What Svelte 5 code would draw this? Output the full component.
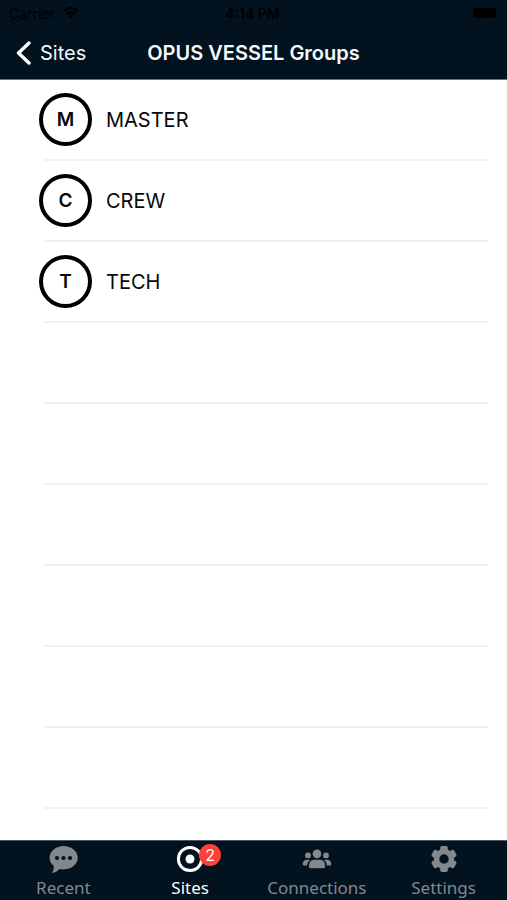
<script>
  const groups = ['MASTER', 'CREW', 'TECH'];
  const emptyRows = [1, 2, 3, 4, 5, 6];
  const tabs = [
    { id: 'recent', label: 'Recent' },
    { id: 'sites', label: 'Sites', badge: 2 },
    { id: 'connections', label: 'Connections' },
    { id: 'settings', label: 'Settings' }
  ];
  let active = $state('sites');
</script>

<div class="app">
  <header>
    <div class="status">
      <div class="carrier">
        <span>Carrier</span>
        <svg width="16" height="12" viewBox="0 0 16 12" aria-hidden="true">
          <path d="M1 4.2Q8-2 15 4.2M3.5 7Q8 3.3 12.5 7" fill="none" stroke="#000" stroke-width="2.4" />
          <path d="M5.4 9Q8 7 10.6 9L8 12Z" />
        </svg>
      </div>
      <span class="clock">4:14 PM</span>
      <div class="power"><span class="battery"></span></div>
    </div>
    <div class="nav">
      <button class="back">
        <svg width="15" height="24" viewBox="0 0 15 24" aria-hidden="true">
          <path d="M13 2 2.5 12 13 22" fill="none" stroke="#fff" stroke-width="3.4" stroke-linecap="round" stroke-linejoin="round" />
        </svg>
        <span>Sites</span>
      </button>
      <h1>OPUS VESSEL Groups</h1>
    </div>
  </header>

  <main>
    <ul>
      {#each groups as group}
        <li>
          <button class="group">
            <span class="avatar">{group[0]}</span>
            <span>{group}</span>
          </button>
        </li>
      {/each}
      {#each emptyRows as row (row)}
        <li aria-hidden="true"></li>
      {/each}
    </ul>
  </main>

  <nav class="tabs">
    {#each tabs as tab}
      <button class="tab" class:active={active === tab.id} onclick={() => (active = tab.id)}>
        <span class="icon">
          <svg width="30" height="28" viewBox="0 0 30 28" aria-hidden="true">
            {#if tab.id === 'recent'}
              <path fill="currentColor" d="M15.5 1C23.4 1 29.8 6.2 29.8 12.8S23.4 24.4 15.5 24.4Q13.4 24.4 11.5 24C9.2 26.3 7.2 27.6 3.8 28C5.2 26.4 6 23.9 5.8 21.1C3.1 18.9 1.6 16 1.6 12.8C1.6 6.2 7.9 1 15.5 1Z" />
              <g fill="#02121f">
                <circle cx="9" cy="13" r="2.1" />
                <circle cx="15.5" cy="13" r="2.1" />
                <circle cx="22" cy="13" r="2.1" />
              </g>
            {:else if tab.id === 'sites'}
              <circle cx="15" cy="14" r="11.6" fill="none" stroke="currentColor" stroke-width="3" />
              <circle cx="15" cy="14" r="4.5" fill="currentColor" />
            {:else if tab.id === 'connections'}
              <g fill="currentColor">
                <circle cx="15" cy="8.8" r="4.4" />
                <circle cx="6" cy="10.4" r="2.9" />
                <circle cx="24" cy="10.4" r="2.9" />
                <path d="M7 21.8V20.3C7 16.8 9.4 14.8 12.5 14.8H17.5C20.6 14.8 23 16.8 23 20.3V21.8Q23 23.3 21.5 23.3H8.5Q7 23.3 7 21.8Z" />
                <path d="M8.3 15Q5.2 16.8 5.3 20.5H2Q.7 20.5.7 19.2C.7 16.6 2.4 14.8 5 14.8ZM21.7 15Q24.8 16.8 24.7 20.5H28Q29.3 20.5 29.3 19.2C29.3 16.6 27.6 14.8 25 14.8Z" />
              </g>
            {:else}
              <g fill="currentColor">
                {#each [0, 60, 120] as angle}
                  <rect x="11.2" y="1" width="7.6" height="26" rx="1.8" transform="rotate({angle} 15 14)" />
                {/each}
              </g>
              <circle cx="15" cy="14" r="7.4" fill="none" stroke="currentColor" stroke-width="5.4" />
              <circle cx="15" cy="14" r="4.7" fill="#02121f" />
            {/if}
          </svg>
          {#if tab.badge}<span class="badge">{tab.badge}</span>{/if}
        </span>
        <span>{tab.label}</span>
      </button>
    {/each}
  </nav>
</div>

<style>
  :global(body) {
    margin: 0;
    background: #fff;
  }
  .app {
    min-height: 100vh;
    display: flex;
    flex-direction: column;
    font-family: Inter, Roboto, sans-serif;
    font-size: 20px;
    color: #080808;
  }
  button {
    border: 0;
    padding: 0;
    background: none;
    font: inherit;
    color: inherit;
    cursor: pointer;
  }
  header {
    background: #02121f;
    border-bottom: 1px solid #63727d;
  }
  .status {
    display: grid;
    grid-template-columns: 1fr auto 1fr;
    align-items: center;
    height: 26px;
    padding: 0 11px 0 9px;
    font-size: 14px;
    color: #000;
  }
  .carrier {
    display: flex;
    align-items: center;
    gap: 8px;
  }
  .clock {
    font-weight: 600;
  }
  .power {
    display: flex;
    justify-content: flex-end;
  }
  .battery {
    width: 23px;
    height: 10px;
    border-radius: 3px;
    background: #000;
  }
  .nav {
    display: grid;
    grid-template-columns: 1fr auto 1fr;
    align-items: center;
    height: 53px;
    padding: 0 16px;
    color: #f5f9fc;
  }
  .back {
    display: flex;
    align-items: center;
    gap: 9px;
    justify-self: start;
  }
  h1 {
    margin: 0;
    font-size: 20px;
    font-weight: 600;
  }
  main {
    flex: 1;
  }
  ul {
    list-style: none;
    margin: 0;
    padding: 0 19px 0 44px;
  }
  li {
    box-sizing: border-box;
    height: 81px;
    border-bottom: 2px solid #f1f1f1;
  }
  .group {
    display: flex;
    align-items: center;
    gap: 14px;
    width: 100%;
    height: 100%;
    margin-left: -5px;
  }
  .avatar {
    box-sizing: border-box;
    display: flex;
    align-items: center;
    justify-content: center;
    width: 53px;
    height: 53px;
    border: 4px solid #000;
    border-radius: 50%;
    font-size: 19px;
    font-weight: 600;
  }
  .tabs {
    display: grid;
    grid-template-columns: repeat(4, 1fr);
    box-sizing: border-box;
    height: 60px;
    background: #02121f;
    border-top: 1px solid #4b5963;
    font-family: "Noto Sans", sans-serif;
    font-size: 17px;
    line-height: 24px;
  }
  .tab {
    display: flex;
    flex-direction: column;
    align-items: center;
    gap: 3px;
    padding-top: 4px;
    color: #83888c;
  }
  .tab.active {
    color: #fff;
  }
  .icon {
    position: relative;
    display: flex;
  }
  .badge {
    position: absolute;
    left: 24px;
    top: -1px;
    width: 22px;
    height: 22px;
    border-radius: 50%;
    background: #ff4038;
    color: #fff;
    font-family: Inter, sans-serif;
    font-size: 16px;
    line-height: 22px;
    text-align: center;
  }
</style>
